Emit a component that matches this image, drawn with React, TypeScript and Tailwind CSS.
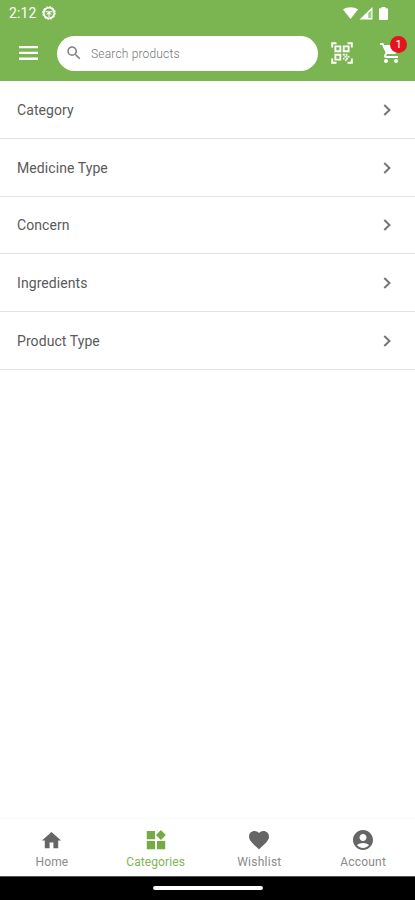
import React from "react";
import { MdSearch, MdHome, MdFavorite, MdAccountCircle, MdShoppingCart } from "react-icons/md";

const rows = [
  { label: "Category", height: "h-[58px]" },
  { label: "Medicine Type", height: "h-[58px]" },
  { label: "Concern", height: "h-[57px]" },
  { label: "Ingredients", height: "h-[58px]" },
  { label: "Product Type", height: "h-[58px]" },
];

function StatusBar() {
  return (
    <div className="flex h-[26px] items-center pl-[9px] pr-[27px]">
      <span className="text-[14px] leading-none tracking-[0.1px]">2:12</span>
      <svg className="ml-[6px]" width="14" height="14" viewBox="0 0 14 14" fill="none" stroke="white">
        <circle cx="7" cy="7" r="5.3" strokeWidth="1.8" />
        <circle cx="7" cy="7" r="6.4" strokeWidth="1" strokeDasharray="1.65 1.65" />
        <path d="M3.500 5.700h7M7 6v5M4.800 8.500 7 6l2.200 2.500" strokeWidth="1.100" />
      </svg>
      <div className="ml-auto flex items-center">
        <svg width="15" height="12" viewBox="0 0 15 12" fill="white">
          <path d="M0 2.6C4.1-.6 10.900-.6 15 2.600L7.500 12z" />
        </svg>
        <svg className="ml-[1px]" width="14" height="13" viewBox="0 0 14 13" fill="white">
          <path fillRule="evenodd" d="M13.500 0v12.500H.5zM12.300 3.200 9.300 6.100V11h3z" />
          <path d="M9.300 6.100l3-2.900V11h-3z" fillOpacity=".3" />
        </svg>
        <svg className="ml-[6px]" width="9" height="13" viewBox="0 0 9 13" fill="white">
          <path d="M2.500 0h4v1.300H8q1 0 1 1V12q0 1-1 1H1q-1 0-1-1V2.300q0-1 1-1h1.500z" />
        </svg>
      </div>
    </div>
  );
}

function ScanIcon() {
  return (
    <svg className="ml-[13px] shrink-0" width="22" height="22" viewBox="0 0 22 22" fill="none" stroke="white" strokeWidth="1.9">
      <path d="M1.200 5.500V1.200H5.500M16.500 1.200h4.300V5.500M20.800 16.500v4.300H16.500M5.500 20.800H1.200V16.500" />
      <path d="M4.400 4.400h4.900v4.900H4.400zM12.700 4.400h4.900v4.900h-4.900zM4.400 12.700h4.900v4.900H4.400z" strokeWidth="1.900" />
      <path d="M11.800 12.600h2M14.800 12.600h1.500M13.500 14.600h2M16.500 14.600h2M12 16.600h1.500M15 16.600h2M14 18.300h1.500" strokeWidth="1.700" />
    </svg>
  );
}

function CategoriesIcon() {
  return (
    <svg width="20" height="20" viewBox="0 0 20 20" fill="currentColor">
      <path d="M.8 1h8.200v8.200H.8zM.8 11h8.200v8.200H.8zM11 11h8.200v8.200H11zM14.900.1l4.900 4.900-4.900 4.900L10 5z" />
    </svg>
  );
}

const tabs = [
  { label: "Home", icon: <MdHome size={23} />, color: "text-[#666666]", text: "text-[#8a8a8a]", spacing: "tracking-[0.15px]" },
  { label: "Categories", icon: <CategoriesIcon />, color: "text-[#72ac42]", text: "text-[#7fb656]", spacing: "tracking-[0.1px]" },
  { label: "Wishlist", icon: <MdFavorite size={24} />, color: "text-[#666666]", text: "text-[#8a8a8a]", spacing: "tracking-[0.25px]" },
  { label: "Account", icon: <MdAccountCircle size={24} />, color: "text-[#666666]", text: "text-[#8a8a8a]", spacing: "tracking-[0.2px]" },
];

export default function App() {
  return (
    <div className="flex h-[900px] w-[415px] flex-col overflow-hidden bg-white font-['Roboto',sans-serif]">
      <header className="h-[81px] shrink-0 bg-[#7ab551] text-white">
        <StatusBar />
        <div className="flex h-[54px] items-center">
          <svg className="ml-[19px] shrink-0" width="19" height="14" viewBox="0 0 19 14" fill="white">
            <path d="M0 0h19v2.300H0zM0 5.800h19v2.300H0zM0 11.600h19v2.300H0z" />
          </svg>
          <div className="ml-[19px] flex h-[35px] w-[261px] shrink-0 items-center rounded-full bg-white pl-[8px]">
            <MdSearch size={18} className="text-[#808080]" />
            <span className="ml-[8px] pt-[1px] text-[12px] font-light tracking-[0.18px] text-[#757575]">Search products</span>
          </div>
          <ScanIcon />
          <div className="relative ml-[26px] h-[24px] w-[24px] shrink-0">
            <MdShoppingCart size={24} className="text-white" />
            <span className="absolute left-[11px] top-[-5px] flex h-[17px] w-[17px] items-center justify-center rounded-full bg-[#e5141c] text-[11px] leading-none">1</span>
          </div>
        </div>
      </header>

      <main className="flex-1">
        {rows.map((row) => (
          <div key={row.label} className={`flex ${row.height} items-center justify-between border-b border-[#e2e2e2] pl-[17px] pr-[23px]`}>
            <span className="text-[14px] leading-[20px] tracking-[0.08px] text-[#5a5a5a]">{row.label}</span>
            <svg width="9" height="12" viewBox="0 0 9 12" fill="none" stroke="#757575" strokeWidth="2">
              <path d="M1.300 1l5.200 5-5.200 5" />
            </svg>
          </div>
        ))}
      </main>

      <nav className="grid h-[58px] shrink-0 grid-cols-4 border-t border-[#fafafa]">
        {tabs.map((tab) => (
          <div key={tab.label} className="flex flex-col items-center pt-[9px]">
            <div className={`flex h-[24px] items-center ${tab.color}`}>{tab.icon}</div>
            <span className={`mt-[3px] text-[12px] leading-[14px] ${tab.spacing} ${tab.text}`}>{tab.label}</span>
          </div>
        ))}
      </nav>
      <div className="flex h-[24px] shrink-0 justify-center border-t border-[#555555] bg-black pt-[9px]">
        <div className="h-[4px] w-[110px] rounded-full bg-white" />
      </div>
    </div>
  );
}
